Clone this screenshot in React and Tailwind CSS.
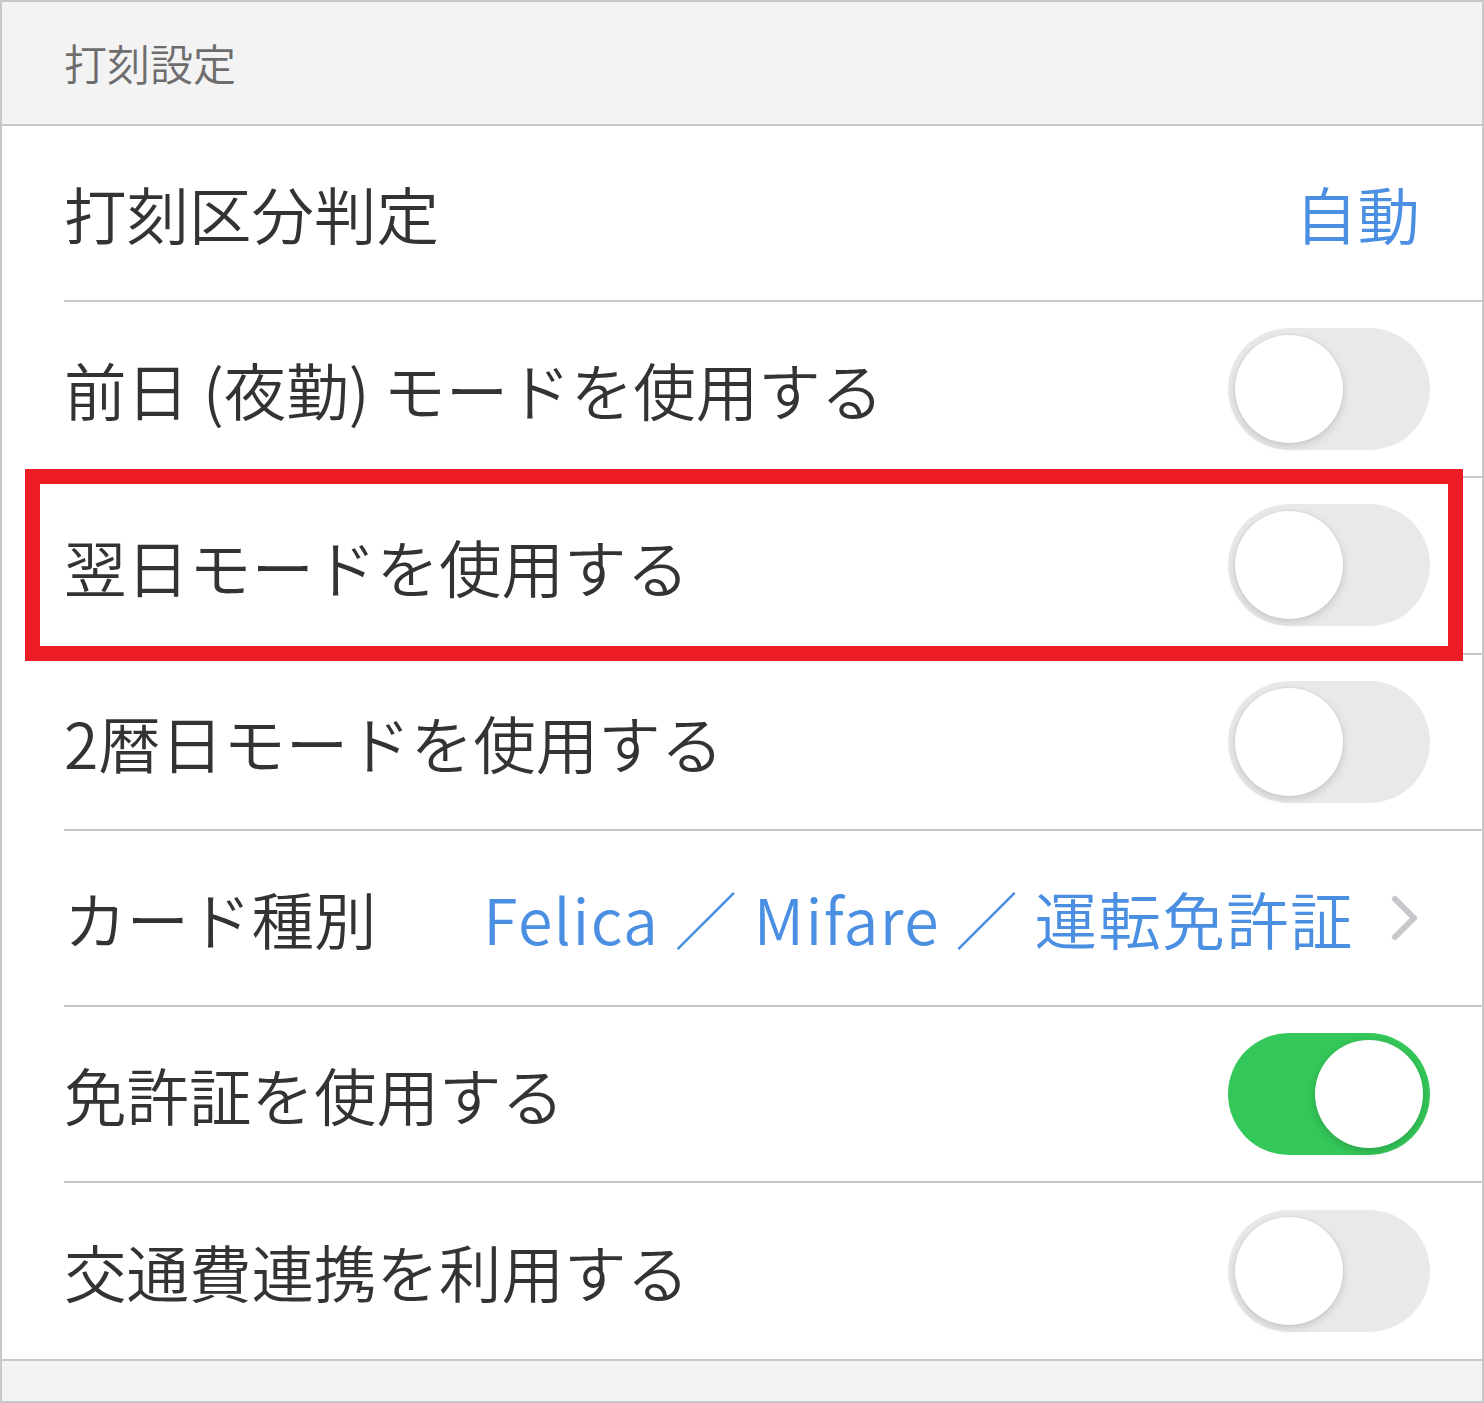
import React from "react";

const rows = [
    { label: "打刻区分判定", value: "自動" },
    { label: "前日 (夜勤) モードを使用する", toggle: false },
    { label: "翌日モードを使用する", toggle: false },
    { label: "2暦日モードを使用する", toggle: false },
    { label: "カード種別", value: "Felica ／ Mifare ／ 運転免許証", chevron: true },
    { label: "免許証を使用する", toggle: true },
    { label: "交通費連携を利用する", toggle: false },
];

function Toggle({ on }) {
    if (on) {
        return (
            <div className="relative w-[202px] h-[122px] rounded-full bg-[#34c759]">
                <div className="absolute right-[7px] top-[7px] w-[108px] h-[108px] rounded-full bg-white shadow-[0_3px_8px_rgba(0,0,0,0.18)]" />
            </div>
        );
    }
    return (
        <div className="relative w-[202px] h-[122px] rounded-full bg-[#e9e9eb]">
            <div className="absolute left-[7px] top-[7px] w-[108px] h-[108px] rounded-full bg-white shadow-[0_3px_8px_rgba(0,0,0,0.15),0_0_0_1px_rgba(0,0,0,0.03)]" />
        </div>
    );
}

function Chevron() {
    return (
        <svg width="30" height="48" viewBox="0 0 30 48" className="ml-[36px]">
            <polyline points="5,5 24,24 5,43" fill="none" stroke="#c7c7cc" strokeWidth="6" strokeLinecap="round" strokeLinejoin="round" />
        </svg>
    );
}

export default function App() {
    return (
        <div
            className="relative w-[1484px] h-[1403px] border-2 border-[#c8c8c8] bg-[#f3f3f3] flex flex-col font-[350]"
            style={{ fontFamily: '"Noto Sans CJK JP", "Noto Sans", sans-serif' }}
        >
            <div className="h-[124px] flex items-center pl-[62px] border-b-2 border-[#c8c8c8] text-[43px] text-[#6d6d6d] pb-[2px]">
                打刻設定
            </div>
            <div className="bg-white border-b-2 border-[#c8c8c8]">
                {rows.map((r, i) => (
                    <div key={i} className="pl-[62px]">
                        <div
                            className={
                                "h-[176.2px] flex items-center justify-between text-[62.5px] text-[#333333] " +
                                (i < rows.length - 1 ? "border-b-2 border-[#c8c7cc]" : "")
                            }
                        >
                            <span className="whitespace-nowrap">{r.label}</span>
                            {r.value !== undefined && (
                                <div className="flex items-center pr-[62px]">
                                    <span className={"text-[#4a8fe2] whitespace-nowrap " + (r.chevron ? "tracking-[1.4px]" : "")}>{r.value}</span>
                                    {r.chevron && <Chevron />}
                                </div>
                            )}
                            {r.toggle !== undefined && (
                                <div className="pr-[52px]">
                                    <Toggle on={r.toggle} />
                                </div>
                            )}
                        </div>
                    </div>
                ))}
            </div>
            <div className="flex-1" />
            <div className="absolute left-[23px] top-[467px] w-[1438px] h-[192px] border-[15px] border-[#ed1c24]" />
        </div>
    );
}
